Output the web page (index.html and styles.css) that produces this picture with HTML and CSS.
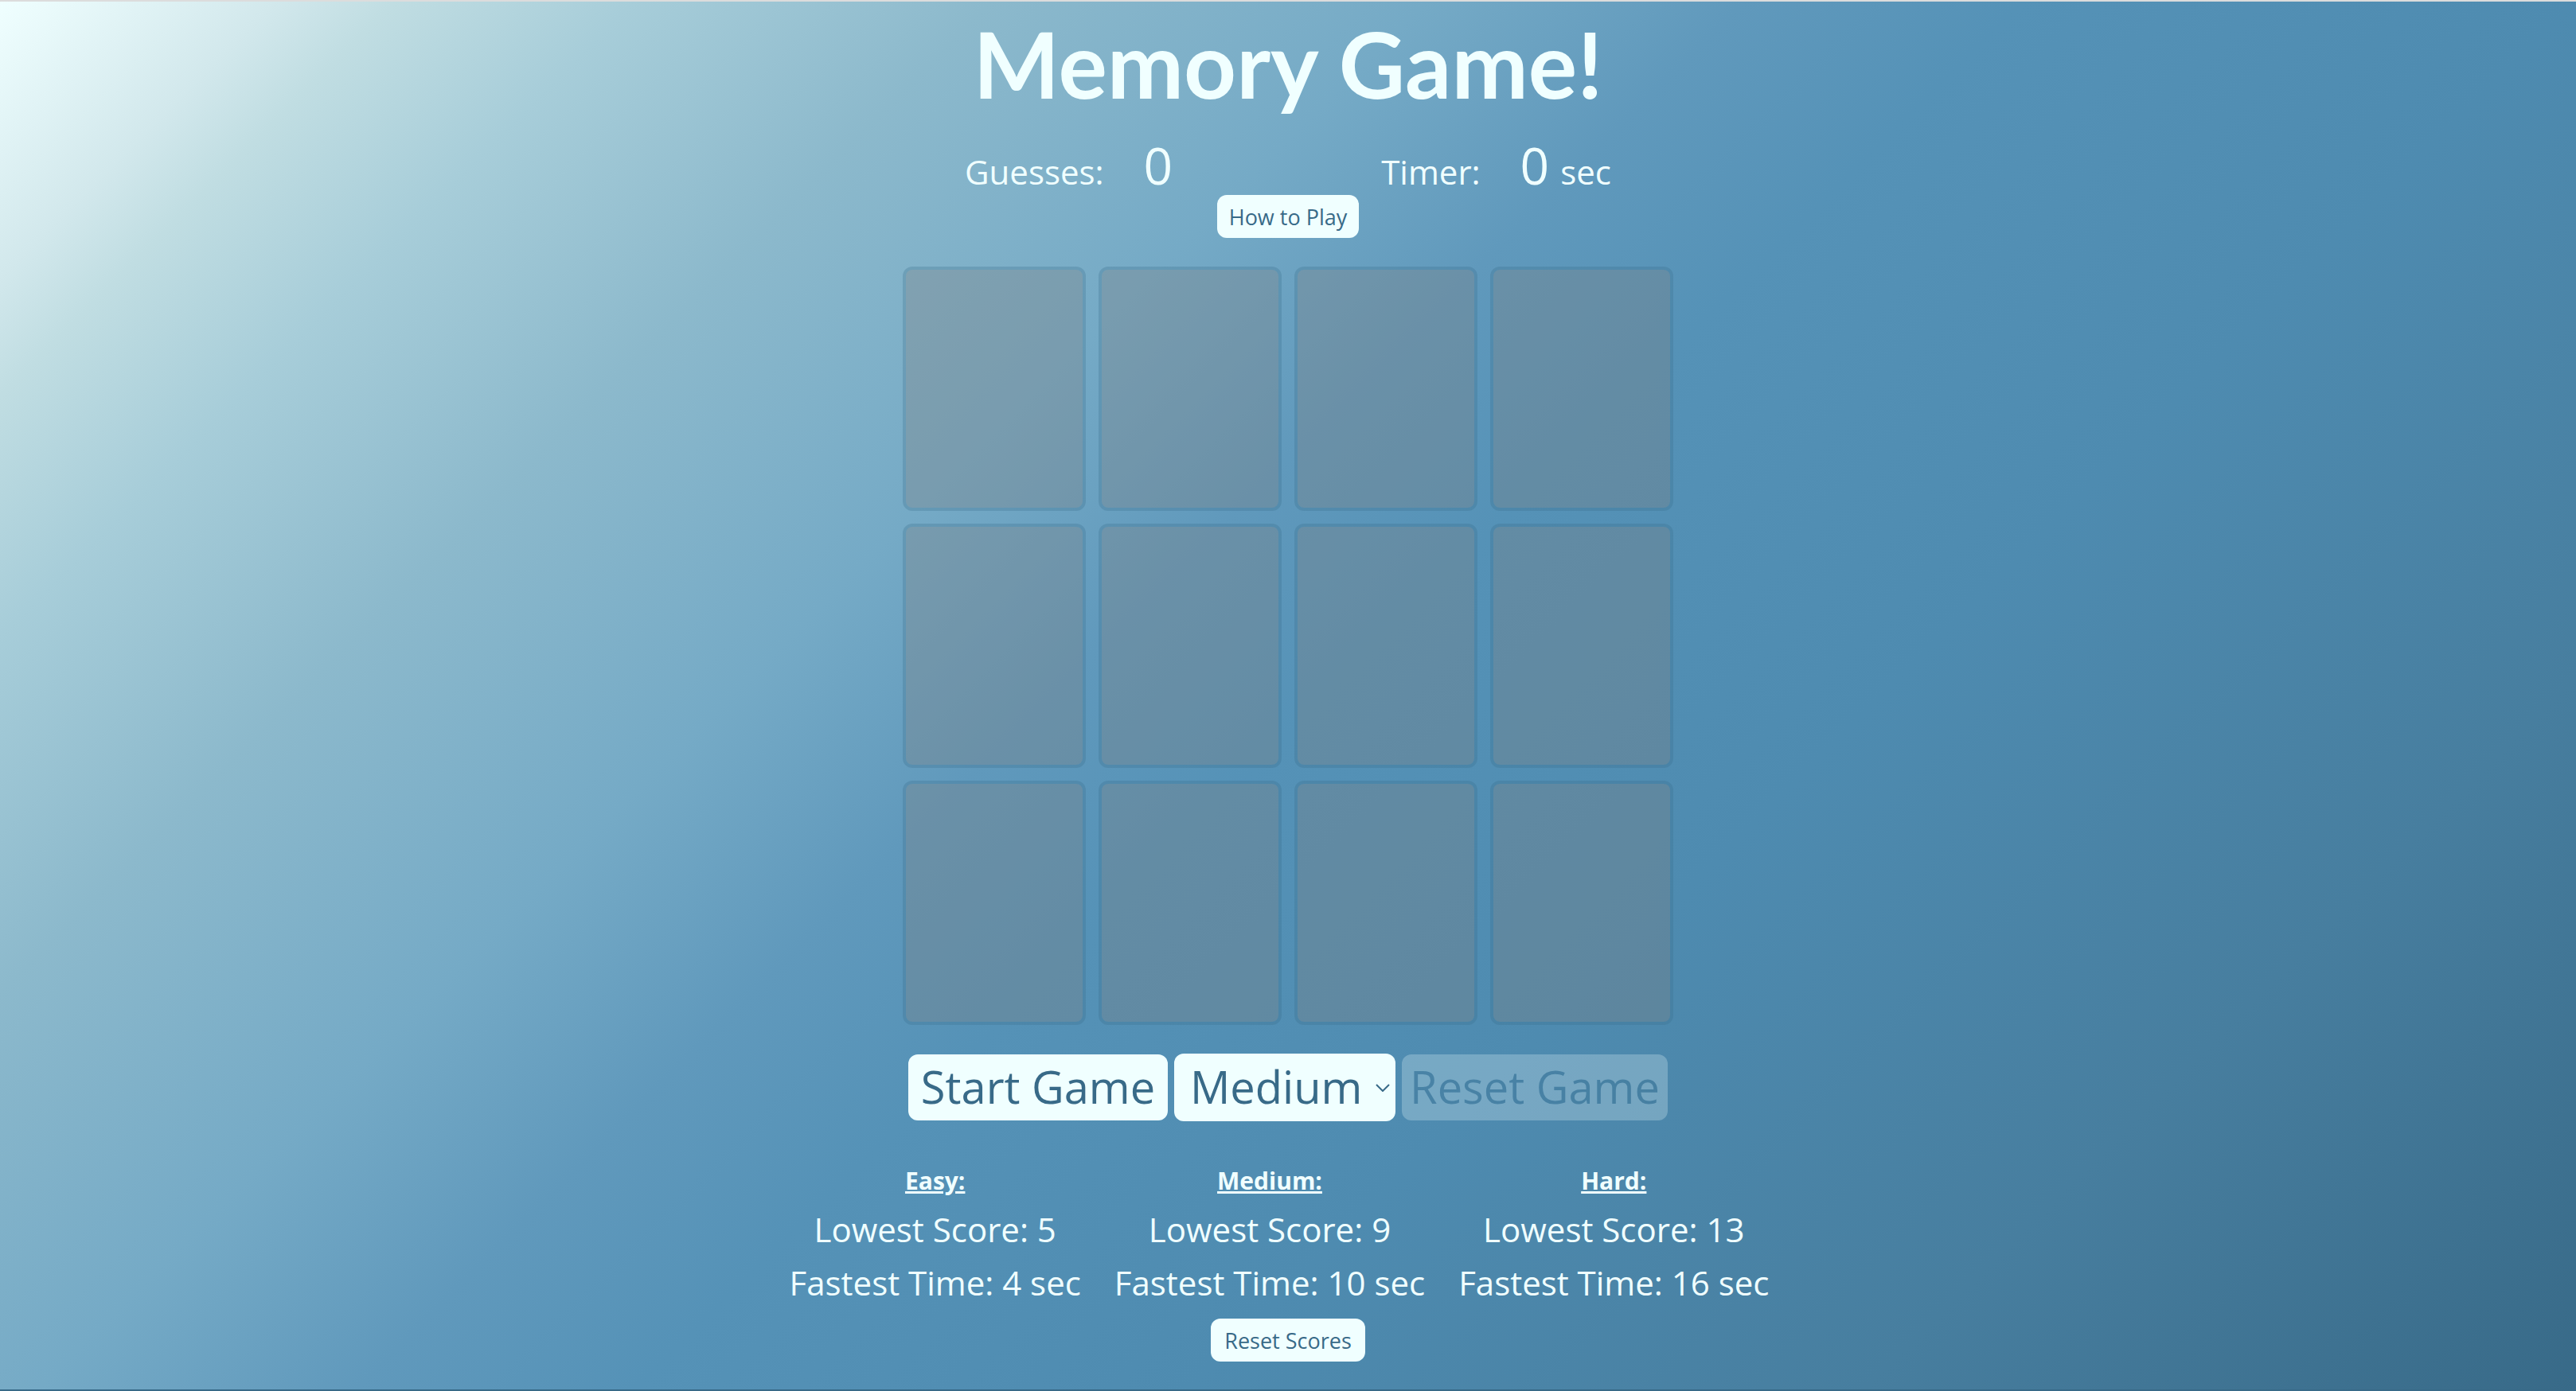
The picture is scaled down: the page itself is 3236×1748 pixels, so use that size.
FILE: index.html
```html
<!DOCTYPE html>
<html lang="en">
<head>
<meta charset="utf-8">
<title>Memory Game!</title>
<link rel="stylesheet" href="styles.css">
</head>
<body>
<main class="game">
  <h1 class="title">Memory Game!</h1>
  <section class="status">
    <p class="stat">Guesses:<span class="value">0</span></p>
    <p class="stat">Timer:<span class="value">0</span><span class="unit">sec</span></p>
  </section>
  <button class="button small how" type="button">How to Play</button>
  <section class="board">
    <div class="card"></div><div class="card"></div><div class="card"></div><div class="card"></div>
    <div class="card"></div><div class="card"></div><div class="card"></div><div class="card"></div>
    <div class="card"></div><div class="card"></div><div class="card"></div><div class="card"></div>
  </section>
  <section class="controls">
    <button class="button large start" type="button">Start Game</button>
    <div class="picker">
      <select class="button large level" aria-label="Difficulty"><option>Easy</option><option selected>Medium</option><option>Hard</option></select>
      <svg class="chevron" viewBox="0 0 18 10" aria-hidden="true"><path d="M1 1l8 8 8-8"/></svg>
    </div>
    <button class="button large reset" type="button" disabled>Reset Game</button>
  </section>
  <section class="scores">
    <div class="score"><h2 class="level-name">Easy:</h2><p class="record">Lowest Score: 5</p><p class="record">Fastest Time: 4 sec</p></div>
    <div class="score"><h2 class="level-name">Medium:</h2><p class="record">Lowest Score: 9</p><p class="record">Fastest Time: 10 sec</p></div>
    <div class="score"><h2 class="level-name">Hard:</h2><p class="record">Lowest Score: 13</p><p class="record">Fastest Time: 16 sec</p></div>
  </section>
  <button class="button small clear" type="button">Reset Scores</button>
</main>
</body>
</html>
```
FILE: styles.css
```css
* { box-sizing: border-box; }
body {
  margin: 0;
  min-height: 100vh;
  border-top: 2px solid #dcdcdc;
  border-bottom: 2px solid #386a88;
  background: linear-gradient(135deg, #f0ffff 0%, #d2e8ec 7%, #c0dde2 10%, #a7cdd9 16%, #8cb9cc 25%, #75aac6 36%, #6099bc 44%, #5592b7 51%, #4e8bb0 65%, #477e9f 82%, #386a88 100%);
  color: #f0ffff;
  font-family: "Open Sans", "Noto Sans", sans-serif;
}
.game { display: flex; flex-direction: column; align-items: center; }
h1, h2, p { margin: 0; }
.title { padding-top: 12px; font-family: Lato, sans-serif; font-size: 115px; line-height: 130px; font-weight: 700; }
.status { display: flex; justify-content: center; gap: 248px; padding-top: 35px; }
.stat { display: flex; align-items: baseline; font-size: 42px; line-height: 58px; }
.value { margin: 0 14px 0 50px; font-size: 64px; }
.button {
  border: 0;
  border-radius: 12px;
  padding: 0;
  background: #f0ffff;
  color: #386a88;
  font-family: inherit;
}
.small { height: 54px; font-size: 27px; }
.how { width: 178px; }
.clear { width: 194px; }
.board { display: grid; grid-template-columns: repeat(4, 230px); gap: 16px; margin-top: 36px; }
.card { height: 307px; border: 4px solid #386a8845; border-radius: 12px; background: #80808054; background-clip: padding-box; }
.controls { display: flex; align-items: center; gap: 8px; margin-top: 36px; }
.large { height: 83px; padding-bottom: 4px; font-size: 56px; }
.start { width: 326px; }
.reset { width: 334px; }
.reset:disabled { opacity: 0.25; }
.picker { position: relative; }
.level { width: 278px; height: 85px; padding: 0 20px 4px; appearance: none; }
.chevron { position: absolute; right: 7px; top: 38px; width: 18px; fill: none; stroke: #386a88; stroke-width: 2; }
.scores { display: flex; gap: 42px; margin: 48px 0 12px; padding-right: 22px; text-align: center; }
.level-name { font-size: 30px; line-height: 54px; text-decoration: underline; }
.record { font-size: 42px; line-height: 67px; }
```
